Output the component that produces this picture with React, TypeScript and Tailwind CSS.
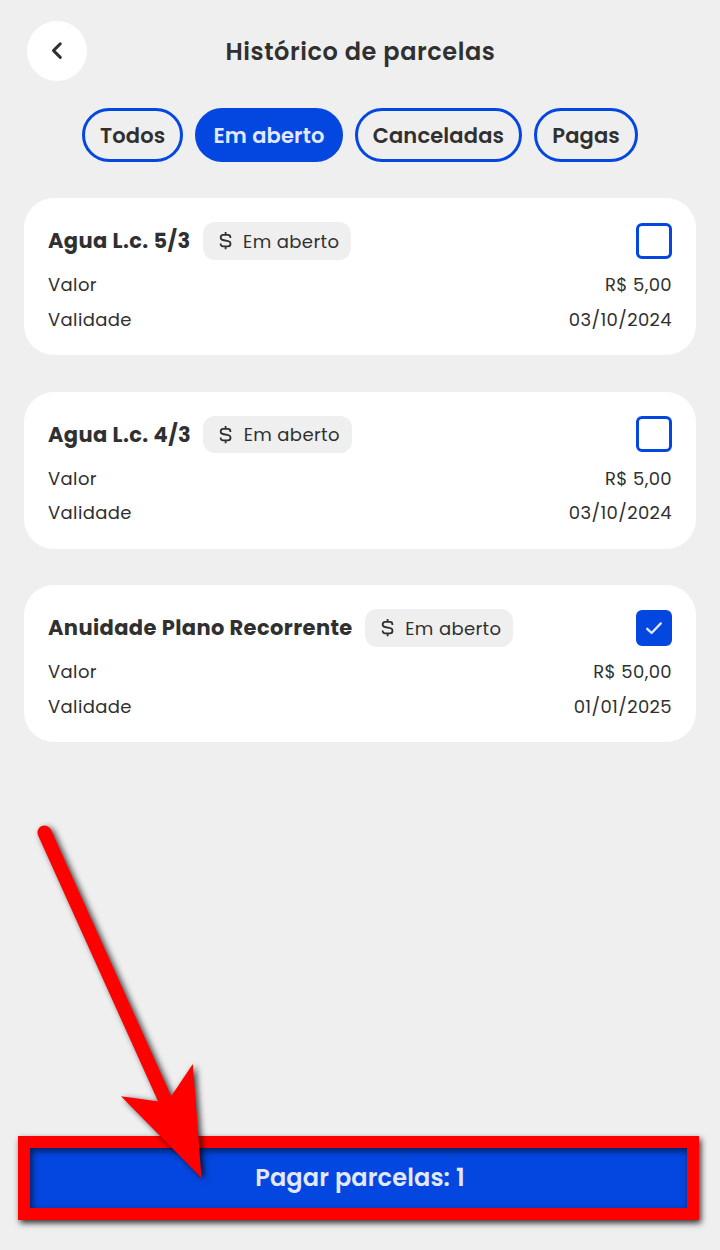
import React from 'react';
import clsx from 'clsx';

interface Installment {
  id: number;
  name: string;
  value: string;
  dueDate: string;
  selected: boolean;
}

const filters = ['Todos', 'Em aberto', 'Canceladas', 'Pagas'];

const installments: Installment[] = [
  { id: 1, name: 'Agua L.c. 5/3', value: 'R$ 5,00', dueDate: '03/10/2024', selected: false },
  { id: 2, name: 'Agua L.c. 4/3', value: 'R$ 5,00', dueDate: '03/10/2024', selected: false },
  { id: 3, name: 'Anuidade Plano Recorrente', value: 'R$ 50,00', dueDate: '01/01/2025', selected: true },
];

const DollarIcon = () => (
  <svg className="w-[21px] h-[21px]" viewBox="0 0 21 21" fill="none" stroke="currentColor" strokeWidth="1.8" strokeLinejoin="round">
    <path d="M10.6 2V5M10.6 16.4V19.2M15.4 7.9V7.4C15.4 5.9 14.4 4.9 12.9 4.9H8.2C6.7 4.9 5.7 5.9 5.7 7.5C5.7 9 6.5 9.7 7.9 10L13.2 11.2C14.7 11.5 15.5 12.4 15.5 13.7C15.5 15.4 14.5 16.4 12.9 16.4H8.1C6.6 16.4 5.6 15.4 5.6 13.6" />
  </svg>
);

const Checkbox: React.FC<{ checked: boolean }> = ({ checked }) => (
  <div
    className={clsx(
      'flex items-center justify-center w-9 h-9 rounded-[6px] border-3 border-[#0447e0]',
      checked && 'bg-[#0447e0]'
    )}
  >
    {checked && (
      <svg className="w-6 h-6 shrink-0" viewBox="0 0 24 24" fill="none" stroke="#e2e8ff" strokeWidth="2.3" strokeLinecap="round" strokeLinejoin="round">
        <path d="M5.2 12.8L9.6 17L18.8 7.4" />
      </svg>
    )}
  </div>
);

const Row: React.FC<{ label: string; value: string }> = ({ label, value }) => (
  <div className="flex justify-between text-lg leading-6 tracking-[0.375px]">
    <span>{label}</span>
    <span>{value}</span>
  </div>
);

const InstallmentCard: React.FC<{ item: Installment }> = ({ item }) => (
  <div className="h-[157.3px] p-6 rounded-[30px] bg-white">
    <div className="flex items-center h-[37.5px]">
      <h2 className="text-[21px] leading-none font-bold tracking-[0.39px]">{item.name}</h2>
      <div className="flex items-center gap-[7.5px] h-full ml-3 px-3 rounded-xl bg-[#efefef]">
        <DollarIcon />
        <span className="pt-[2px] text-lg leading-none tracking-[0.375px]">Em aberto</span>
      </div>
      <div className="ml-auto">
        <Checkbox checked={item.selected} />
      </div>
    </div>
    <div className="flex flex-col gap-[10.7px] mt-[13.7px]">
      <Row label="Valor" value={item.value} />
      <Row label="Validade" value={item.dueDate} />
    </div>
  </div>
);

export default function App() {
  const active = 'Em aberto';
  const selectedCount = installments.filter((item) => item.selected).length;

  return (
    <div className="relative flex flex-col w-[720px] h-[1250px] overflow-hidden bg-[#efefef] text-[#303030] font-['Poppins','Open_Sans',sans-serif]">
      <header className="flex items-center h-[60px] mt-[21px] px-[27px]">
        <button className="flex items-center justify-center w-[60px] h-[60px] rounded-full bg-white">
          <svg className="w-6 h-6" viewBox="0 0 24 24" fill="none" stroke="currentColor" strokeWidth="3" strokeLinecap="round" strokeLinejoin="round">
            <path d="M15.3 4.8L8.5 11.6L15.3 18.4" />
          </svg>
        </button>
        <h1 className="flex-1 pt-[2px] pr-[59px] text-center text-2xl font-semibold tracking-[0.58px]">Histórico de parcelas</h1>
      </header>

      <nav className="flex justify-center gap-3 mt-[27px]">
        {filters.map((filter) => (
          <button
            key={filter}
            className={clsx(
              'h-[54px] px-[15px] pt-[2px] rounded-full border-3 border-[#0447e0] text-[21px] font-semibold tracking-[0.17px]',
              filter === active && 'bg-[#0447e0] text-[#e2e8ff]'
            )}
          >
            {filter}
          </button>
        ))}
      </nav>

      <main className="flex flex-col gap-[36.3px] mt-9 px-6">
        {installments.map((item) => (
          <InstallmentCard key={item.id} item={item} />
        ))}
      </main>

      <footer className="mt-auto mb-[30px] pl-[18px] pr-[21px]">
        <div className="h-[84px] border-12 border-[#ff0000] bg-[#0447e0] shadow-[2px_3px_6px_rgba(0,0,0,0.8),inset_2px_3px_7px_rgba(0,0,0,0.6)]">
          <button className="w-full h-full pl-[3px] text-2xl font-semibold tracking-[0.15px] text-[#e2e8ff]">
            Pagar parcelas: {selectedCount}
          </button>
        </div>
      </footer>

      {/* Arrow pointing at the pay button */}
      <svg
        className="absolute inset-0 w-[720px] h-[1250px] pointer-events-none drop-shadow-[3px_2px_3px_rgba(0,0,0,0.75)]"
        viewBox="0 0 720 1250"
        fill="#ff0000"
      >
        <path d="M44.5 832.5L167 1104" stroke="#ff0000" strokeWidth="14" strokeLinecap="round" />
        <path d="M201.5 1178L121 1096.3L159 1101.5L172 1095L192.8 1064Z" />
      </svg>
    </div>
  );
}
